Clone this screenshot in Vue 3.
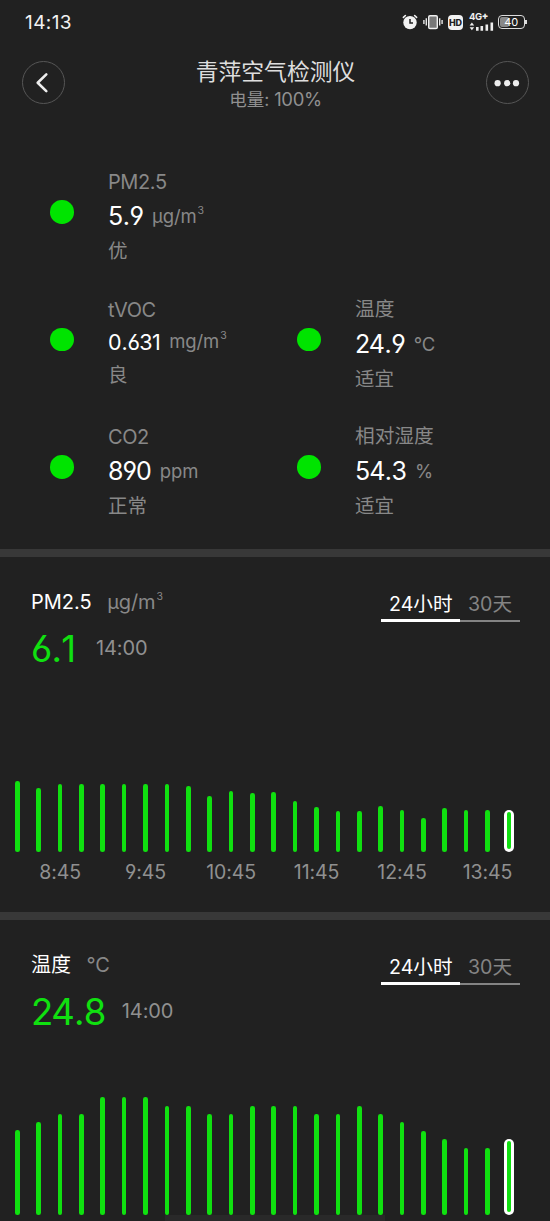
<script setup>
const metrics = [
  { name: 'PM2.5', value: '5.9', unit: 'µg/m', cubed: true, status: '优', wide: true },
  { name: 'tVOC', value: '0.631', unit: 'mg/m', cubed: true, status: '良', compact: true },
  { name: '温度', value: '24.9', unit: '°C', status: '适宜', cjk: true },
  { name: 'CO2', value: '890', unit: 'ppm', status: '正常' },
  { name: '相对湿度', value: '54.3', unit: '%', status: '适宜', cjk: true },
]

const charts = [
  {
    name: 'PM2.5', unit: 'µg/m', cubed: true, value: '6.1', time: '14:00',
    bars: [71, 64, 68, 68, 68, 68, 68, 68, 66, 56, 61, 58.5, 59.5, 51, 45, 41, 41, 46, 42, 34, 44, 42, 41.5, 42],
    labels: ['8:45', '9:45', '10:45', '11:45', '12:45', '13:45'],
  },
  {
    name: '温度', unit: '°C', cjk: true, value: '24.8', time: '14:00',
    bars: [84.5, 92.5, 101, 101, 118, 118, 118, 109, 109, 101, 101, 109, 109, 109, 101, 101, 109, 101, 92.5, 84, 76, 67, 67, 76],
    labels: [],
  },
]

const whole = (v) => v.split('.')[0]
const fraction = (v) => v.split('.')[1]
</script>

<template>
  <main class="screen">
    <div class="statusbar">
      <span class="clock">14:13</span>
      <div class="icons">
        <svg class="alarm" width="16" height="16" viewBox="0 0 16 16">
          <circle cx="8" cy="8.6" r="6.7" fill="#f2f2f2" />
          <path d="M1.4 3.4 3.4 1.5M14.6 3.4 12.6 1.5" stroke="#f2f2f2" stroke-width="1.6" stroke-linecap="round" />
          <path d="M8 5v4h3" fill="none" stroke="#212121" stroke-width="1.5" />
        </svg>
        <svg class="vibrate" width="20" height="16" viewBox="0 0 20 16">
          <rect x="5.7" y="1.7" width="8.6" height="12.8" rx="1.3" fill="#777" stroke="#efefef" stroke-width="1.4" />
          <path d="M3.3 4.2v7.4M.9 6v4M16.7 4.2v7.4M19.1 6v4" stroke="#e8e8e8" stroke-width="1.4" />
        </svg>
        <span class="hd">HD</span>
        <div class="signal">
          <span class="net">4G<b>+</b></span>
          <svg width="25" height="9" viewBox="0 0 25 9">
            <path d="M.6 3.4 2.9.6l2.3 2.8zM.6 5.2h4.6L2.9 8.2z" fill="#eee" />
            <path d="M8.3 5v3.7M12.8 4v4.7M17.8 2.4v6.3M22.8.6v8.1" stroke="#eee" stroke-width="2.6" />
          </svg>
        </div>
        <div class="battery"><span class="charge"></span><span class="level">40</span></div>
      </div>
    </div>

    <header class="header">
      <button class="round" aria-label="返回">
        <svg width="42" height="42" viewBox="0 0 42 42">
          <path d="M23.3 12.4 14.7 20.8l8.6 8.3" fill="none" stroke="#ededed" stroke-width="2.6" stroke-linecap="round" stroke-linejoin="round" />
        </svg>
      </button>
      <div class="heading">
        <h1>青萍空气检测仪</h1>
        <p>电量: <span>100%</span></p>
      </div>
      <button class="round" aria-label="更多">
        <svg width="42" height="42" viewBox="0 0 42 42" fill="#ededed">
          <circle cx="11.6" cy="21.2" r="3.1" /><circle cx="21.2" cy="21.2" r="3.1" /><circle cx="30" cy="21.2" r="3.1" />
        </svg>
      </button>
    </header>

    <section class="metrics">
      <article v-for="m in metrics" :key="m.name" class="metric" :class="{ wide: m.wide, compact: m.compact }">
        <i class="dot"></i>
        <div class="info">
          <div class="name" :class="{ cjk: m.cjk }">{{ m.name }}</div>
          <div class="reading">
            <span class="value">{{ whole(m.value) }}<template v-if="fraction(m.value)"><span class="point">.</span>{{ fraction(m.value) }}</template></span>
            <span class="unit">{{ m.unit }}<sup v-if="m.cubed">3</sup></span>
          </div>
          <div class="state">{{ m.status }}</div>
        </div>
      </article>
    </section>

    <section v-for="c in charts" :key="c.name" class="card">
      <div class="top">
        <div class="title" :class="{ cjk: c.cjk }">
          <span class="label">{{ c.name }}</span>
          <span class="unit">{{ c.unit }}<sup v-if="c.cubed">3</sup></span>
        </div>
        <div class="tabs">
          <span class="tab active">24小时</span>
          <span class="tab">30天</span>
        </div>
      </div>
      <div class="current">
        <span class="big">{{ whole(c.value) }}<span class="point">.</span>{{ fraction(c.value) }}</span>
        <span class="time">{{ c.time }}</span>
      </div>
      <div class="bars">
        <div v-for="(h, i) in c.bars" :key="i" class="slot">
          <i class="bar" :class="{ selected: i === c.bars.length - 1 }" :style="{ height: h + 'px' }"></i>
        </div>
      </div>
      <div class="axis">
        <span v-for="l in c.labels" :key="l">{{ l }}</span>
      </div>
    </section>
    <div class="home"></div>
  </main>
</template>

<style>
body { background: #212121; }
</style>

<style scoped>
.screen {
  position: relative;
  width: 550px;
  height: 1221px;
  overflow: hidden;
  box-sizing: border-box;
  background: #212121;
  color: #fff;
  font-family: Inter, "Noto Sans CJK SC", sans-serif;
  font-feature-settings: "cv03", "cv04";
  white-space: nowrap;
}
.statusbar {
  display: flex;
  justify-content: space-between;
  align-items: center;
  height: 44px;
  padding: 0 25.5px 0 25px;
}
.clock { font-size: 19px; letter-spacing: 0.4px; color: #f2f2f2; }
.icons { display: flex; align-items: center; }
.vibrate { margin-left: 5px; }
.hd {
  width: 15px; height: 15px; margin-left: 5px;
  border-radius: 4px;
  background: #f2f2f2; color: #212121;
  font-size: 9px; font-weight: 800; line-height: 15px; text-align: center;
}
.signal { display: flex; flex-direction: column; width: 25px; margin-left: 6px; }
.net { height: 8px; font-size: 9.5px; font-weight: 700; line-height: 6px; letter-spacing: -0.4px; color: #eee; }
.net b { position: relative; top: -1px; }
.battery {
  position: relative;
  width: 26.5px; height: 14px; margin-left: 4px;
  box-sizing: border-box;
  border: 1.4px solid #ddd; border-radius: 4px;
}
.battery::after {
  content: ""; position: absolute; right: -3px; top: 4px;
  width: 1.6px; height: 4px; background: #ddd;
}
.charge { position: absolute; left: 1px; top: 1px; bottom: 1px; width: 9px; border-radius: 2px; background: #888; }
.level { position: absolute; inset: 0; font-size: 11px; line-height: 12px; text-align: center; }

.header {
  display: flex;
  justify-content: space-between;
  height: 78px;
  padding: 17px 21px 0 22px;
  box-sizing: border-box;
}
.round {
  width: 43px; height: 43px; padding: 0;
  box-sizing: border-box;
  border: 1px solid #565656; border-radius: 50%;
  background: none;
}
.round svg { display: block; margin-left: -0.5px; margin-top: -0.5px; }
.heading { display: flex; flex-direction: column; align-items: center; margin-top: -4px; color: #dedede; }
.heading h1 { margin: 0; font-size: 22.8px; font-weight: 400; line-height: 30px; }
.heading p { margin: 0; font-size: 17.5px; line-height: 25px; color: #909090; }
.heading p span { font-size: 18.5px; letter-spacing: -0.4px; }

.metrics {
  display: grid;
  grid-template-columns: 247px 1fr;
  row-gap: 22.5px;
  height: 427px;
  align-content: start;
  padding: 42px 0 0 50px;
  box-sizing: border-box;
}
.metric { display: flex; height: 105px; }
.metric.wide { grid-column: 1 / 3; }
.dot { width: 23.6px; height: 23.6px; margin: 36px 34.4px 0 0; border-radius: 50%; background: #00e400; }
.info { line-height: 35px; }
.name { height: 35px; font-size: 20px; letter-spacing: -0.4px; line-height: 36px; color: #888; }
.name.cjk { font-size: 19.7px; line-height: 35px; letter-spacing: 0; }
.reading { display: flex; align-items: baseline; height: 35px; }
.value { font-size: 25px; letter-spacing: -1px; }
.point { margin: 0 0.02em; }
.unit { position: relative; top: -2px; margin-left: 9px; font-size: 18.5px; letter-spacing: -0.1px; color: #888; }
sup { margin-left: 1px; font-size: 10.5px; line-height: 0; vertical-align: 9px; }
.state { height: 35px; font-size: 19.5px; line-height: 35px; color: #888; }
.compact .reading { height: 31px; line-height: 31px; }
.compact .value { font-size: 21.5px; letter-spacing: -0.6px; }

.card { height: 363px; box-sizing: border-box; border-top: 8.5px solid #383838; }
.top { display: flex; justify-content: space-between; height: 65px; padding: 29px 30px 0 31px; box-sizing: border-box; }
.title { display: flex; align-items: baseline; line-height: 33px; }
.label { font-size: 20px; letter-spacing: 0; }
.title .unit { top: 0; margin-left: 15.5px; font-size: 20px; letter-spacing: -0.1px; }
.tabs { display: flex; height: 36px; }
.tab { width: 60px; box-sizing: border-box; padding-left: 8px; font-size: 19.6px; line-height: 37px; color: #848484; border-bottom: 2px solid #848484; height: 35.5px; }
.tab.active { width: 79px; color: #fff; border-bottom: 3px solid #fff; height: 36px; }
.current { display: flex; align-items: center; height: 50px; padding-left: 31px; }
.big { position: relative; top: 2px; min-width: 48px; font-size: 36.5px; letter-spacing: -1.5px; color: #10e010; }
.time { position: relative; top: 1px; margin-left: 17px; font-size: 20px; letter-spacing: -0.1px; color: #909090; }
.bars { display: flex; align-items: flex-end; height: 179.5px; margin-left: 6.6px; }
.slot { display: flex; justify-content: center; width: 21.38px; }
.bar { width: 4.6px; border-radius: 2.3px; background: #10e010; }
.bar.selected { display: flex; width: 10px; padding: 2.7px; box-sizing: border-box; border-radius: 5px; background: #fff; }
.bar.selected::before { content: ""; flex: 1; border-radius: 2.3px; background: #10e010; }
.axis { display: grid; grid-template-columns: repeat(6, 85.5px); margin-left: 17.3px; font-size: 19.5px; line-height: 41px; letter-spacing: -0.1px; text-align: center; color: #909090; }
.home { position: absolute; left: 165px; bottom: 0; width: 220px; height: 6px; background: rgba(255, 255, 255, 0.04); }
</style>
